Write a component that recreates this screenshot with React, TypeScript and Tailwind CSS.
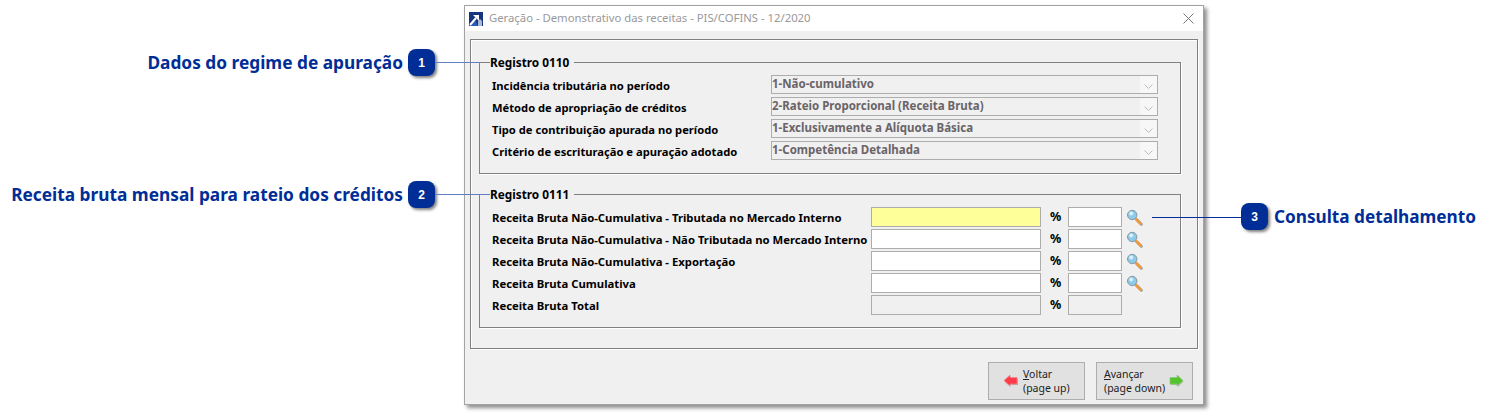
const comboRows = [
  { label: "Incidência tributária no período", value: "1-Não-cumulativo" },
  { label: "Método de apropriação de créditos", value: "2-Rateio Proporcional (Receita Bruta)" },
  { label: "Tipo de contribuição apurada no período", value: "1-Exclusivamente a Alíquota Básica" },
  { label: "Critério de escrituração e apuração adotado", value: "1-Competência Detalhada" },
];

const valueRows = [
  { label: "Receita Bruta Não-Cumulativa - Tributada no Mercado Interno", highlight: true, search: true },
  { label: "Receita Bruta Não-Cumulativa - Não Tributada no Mercado Interno", search: true },
  { label: "Receita Bruta Não-Cumulativa - Exportação", search: true },
  { label: "Receita Bruta Cumulativa", search: true },
  { label: "Receita Bruta Total", disabled: true },
];

function Badge({ n }: { n: number }) {
  return (
    <div className="flex h-[27px] w-[27px] shrink-0 items-center justify-center rounded-[8px] bg-[#002d96] text-[12px] font-bold text-white shadow-[2px_2px_3px_rgba(0,0,0,0.5)] font-['Liberation_Sans',sans-serif]">
      {n}
    </div>
  );
}

function AppIcon() {
  return (
    <svg width="14" height="14" viewBox="0 0 14 14" className="shrink-0">
      <rect width="14" height="14" fill="#17357f" />
      <path d="M0 14 L6 8 L9 14 Z" fill="#2a5bb8" />
      <path d="M1 13 L7 6" stroke="#fff" strokeWidth="2" />
      <path d="M4 3 H10 V9 Z" fill="#fff" />
      <path d="M9 14 V9 L11 7 L13 9 V14 Z" fill="#a9b9d4" />
    </svg>
  );
}

function Magnifier() {
  return (
    <svg width="16" height="18" viewBox="0 0 16 18" className="shrink-0">
      <path d="M9 11 L13.5 15.5" stroke="#a0a0a0" strokeWidth="3" strokeLinecap="round" transform="translate(0.8 0.8)" />
      <path d="M9 11 L13.5 15.5" stroke="#f09a3e" strokeWidth="2.6" strokeLinecap="round" />
      <circle cx="5.2" cy="7" r="4.7" fill="#8ccbea" stroke="#86979f" strokeWidth="1" />
      <circle cx="4.2" cy="5.6" r="2" fill="#d8f0fb" />
    </svg>
  );
}

function ArrowLeft() {
  return (
    <svg width="15" height="14" viewBox="0 0 15 14" className="shrink-0">
      <path d="M1.5 7.5 L7.5 2 V4.5 H15 V11 H7.5 V13 Z" fill="#b9a5a5" />
      <path d="M1 6.5 L7 1 V3.5 H14 V10 H7 V12 Z" fill="#ff3b4a" stroke="#f08a8a" strokeWidth="0.7" />
    </svg>
  );
}

function ArrowRight() {
  return (
    <svg width="15" height="14" viewBox="0 0 15 14" className="shrink-0">
      <path d="M14.5 7.5 L8.5 2 V4.5 H1.5 V11 H8.5 V13 Z" fill="#a9b5a5" />
      <path d="M14 6.5 L8 1 V3.5 H1 V10 H8 V12 Z" fill="#52c42c" stroke="#8fc97c" strokeWidth="0.7" />
    </svg>
  );
}

function Combo({ value }: { value: string }) {
  return (
    <div className="flex h-[19px] w-[387px] items-stretch border border-[#adadad] bg-[#f0f0f0]">
      <span className="flex-1 text-[11.5px] leading-[16px] font-bold text-[#6a6468]">{value}</span>
      <span className="flex w-[17px] items-center justify-center bg-[#f7f7f7]">
        <svg width="9" height="5" viewBox="0 0 9 5" className="mt-[3px]">
          <path d="M0.5 0.5 L4.5 4.5 L8.5 0.5" fill="none" stroke="#bcbcbc" />
        </svg>
      </span>
    </div>
  );
}

function ActionButton({ children }: { children: React.ReactNode }) {
  return (
    <div className="flex h-[38px] w-[97px] items-center border border-[#adadad] bg-[#e1e1e1] text-[10.5px] leading-[14px] text-[#222]">
      {children}
    </div>
  );
}

export default function App() {
  return (
    <div className="relative flex h-[417px] w-[1491px] overflow-hidden bg-white font-['Noto_Sans',sans-serif]">
      {/* callouts, left */}
      <div className="flex w-[464px] shrink-0 flex-col pt-[49px] pr-[29px] text-[17.3px] font-bold text-[#002d96]">
        <div className="flex h-[27px] items-center justify-end gap-[5px] whitespace-nowrap">
          <span>Dados do regime de apuração</span>
          <Badge n={1} />
        </div>
        <div className="mt-[105px] flex h-[27px] items-center justify-end gap-[5px] whitespace-nowrap">
          <span>Receita bruta mensal para rateio dos créditos</span>
          <Badge n={2} />
        </div>
      </div>

      {/* window */}
      <div className="mt-[5px] flex h-[400px] w-[740px] shrink-0 flex-col border border-[#a3a3a3] bg-[#f0f0f0] shadow-[3px_3px_4px_rgba(0,0,0,0.45)]">
        <div className="flex h-[25px] items-center gap-[6px] bg-white pr-[9px] pl-[4px]">
          <AppIcon />
          <span className="flex-1 text-[11.3px] text-[#999]">Geração - Demonstrativo das receitas - PIS/COFINS - 12/2020</span>
          <svg width="11" height="11" viewBox="0 0 11 11">
            <path d="M0.5 0.5 L10.5 10.5 M10.5 0.5 L0.5 10.5" stroke="#777" />
          </svg>
        </div>

        <div className="mx-[5px] mt-[8px] h-[310px] border border-[#808080] pt-[15px] pr-[16px] pl-[8px] shadow-[inset_1px_1px_0_#fff,1px_1px_0_#fff]">
          <fieldset className="h-[119px] border border-[#808080] pr-[22px] pl-[12px] shadow-[1px_1px_0_#fff]">
            <legend className="-ml-[2px] pr-[5px] text-[11.8px] leading-[15px] font-bold text-black">Registro 0110</legend>
            <div className="mt-[5px] flex flex-col gap-[3px]">
              {comboRows.map((row) => (
                <div key={row.label} className="flex h-[19px] items-center justify-between">
                  <span className="mt-[3px] text-[11.2px] leading-[16px] font-bold text-black">{row.label}</span>
                  <Combo value={row.value} />
                </div>
              ))}
            </div>
          </fieldset>

          <fieldset className="mt-[13px] h-[141px] border border-[#808080] pl-[12px] shadow-[1px_1px_0_#fff]">
            <legend className="-ml-[2px] pr-[5px] text-[11.8px] leading-[15px] font-bold text-black">Registro 0111</legend>
            <div className="mt-[5px] flex flex-col gap-[2px]">
              {valueRows.map((row) => (
                <div key={row.label} className="flex h-[20px] items-center">
                  <span className="mt-[2px] w-[379px] whitespace-nowrap text-[11.3px] leading-[16px] font-bold text-black">{row.label}</span>
                  <div
                    className={`h-[20px] w-[170px] border border-[#adadad] ${
                      row.highlight ? "bg-[#ffff99]" : row.disabled ? "bg-[#f0f0f0]" : "bg-white"
                    }`}
                  />
                  <span className="ml-[9px] w-[18px] text-[12.5px] leading-[16px] font-bold text-black">%</span>
                  <div className={`h-[20px] w-[54px] border border-[#adadad] ${row.disabled ? "bg-[#f0f0f0]" : "bg-white"}`} />
                  {row.search && (
                    <div className="ml-[5px]">
                      <Magnifier />
                    </div>
                  )}
                </div>
              ))}
            </div>
          </fieldset>
        </div>

        <div className="mt-[13px] flex justify-end gap-[11px] pr-[10px]">
          <ActionButton>
            <span className="ml-[14px]"><ArrowLeft /></span>
            <span className="ml-[5px]">
              <u>V</u>oltar
              <br />
              (page up)
            </span>
          </ActionButton>
          <ActionButton>
            <span className="ml-[7px]">
              <u>A</u>vançar
              <br />
              (page down)
            </span>
            <span className="ml-[4px]"><ArrowRight /></span>
          </ActionButton>
        </div>
      </div>

      {/* callout, right */}
      <div className="ml-[37px] flex h-[27px] translate-y-[203px] items-center gap-[6px] whitespace-nowrap text-[17.2px] font-bold text-[#002d96]">
        <Badge n={3} />
        <span>Consulta detalhamento</span>
      </div>

      {/* leader lines */}
      <div className="absolute top-[62px] left-[435px] h-px w-[44px] bg-[#5f7fc0]" />
      <div className="absolute top-[194px] left-[435px] h-px w-[55px] bg-[#5f7fc0]" />
      <div className="absolute top-[217px] left-[1152px] h-px w-[89px] bg-[#002d96]" />
    </div>
  );
}
